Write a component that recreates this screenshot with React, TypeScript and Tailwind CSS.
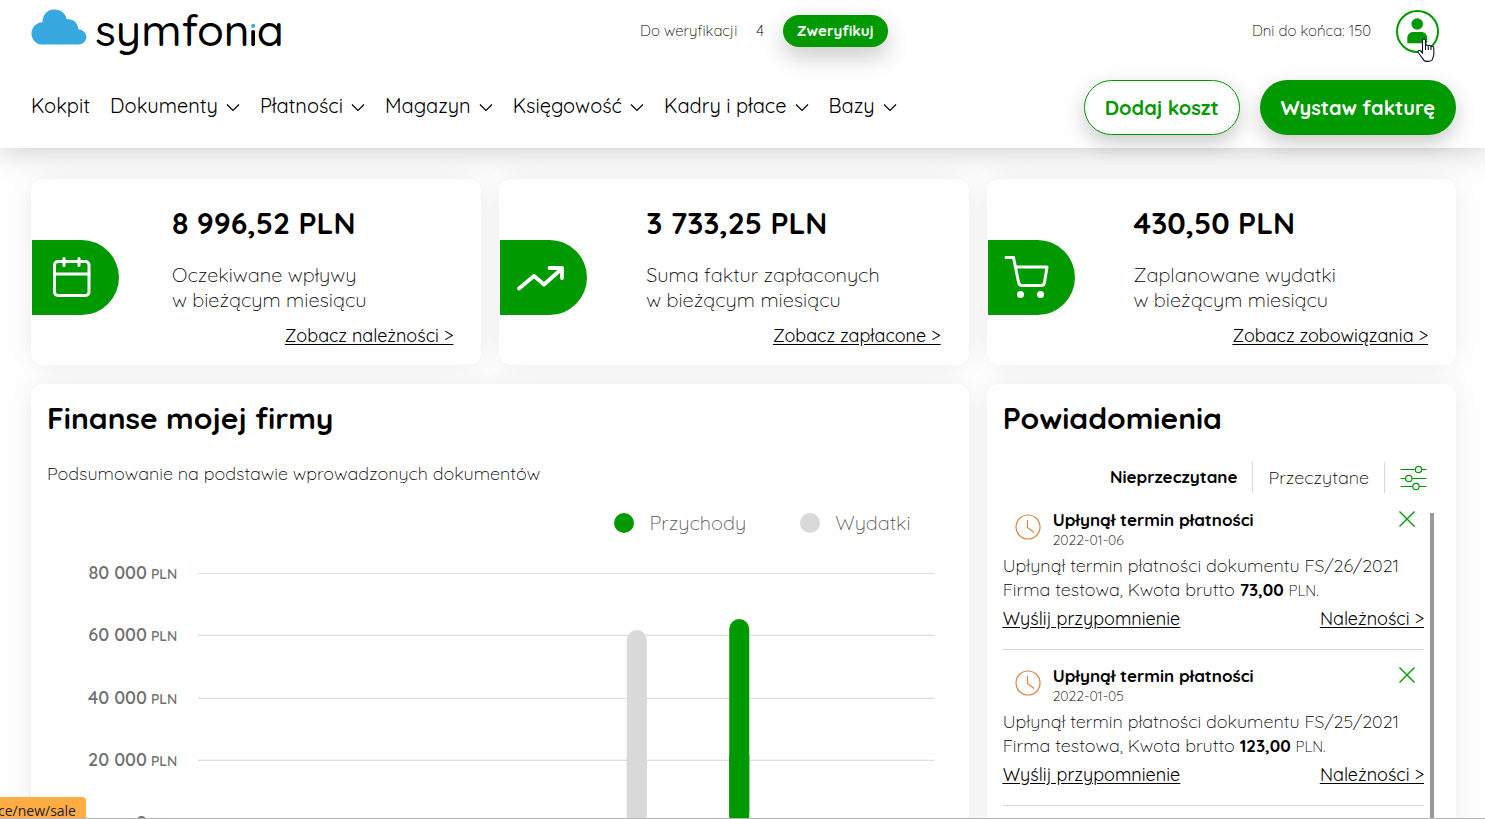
import type { ReactNode } from "react";

const NAV = [
  { label: "Kokpit", menu: false },
  { label: "Dokumenty", menu: true },
  { label: "Płatności", menu: true },
  { label: "Magazyn", menu: true },
  { label: "Księgowość", menu: true },
  { label: "Kadry i płace", menu: true },
  { label: "Bazy", menu: true },
];

const NOTIFICATIONS = [
  { date: "2022-01-06", doc: "FS/26/2021", amount: "73,00" },
  { date: "2022-01-05", doc: "FS/25/2021", amount: "123,00" },
];

const TICKS = [
  { y: 18, value: "80 000" },
  { y: 80, value: "60 000" },
  { y: 143, value: "40 000" },
  { y: 205, value: "20 000" },
  { y: 268, value: "0" },
];

const card =
  "bg-[#fefefe] rounded-xl shadow-[0_0_28px_-4px_rgba(0,0,0,0.1)] overflow-hidden";

function Logo() {
  return (
    <a href="#" className="flex items-center gap-2 pb-0.5">
      <svg
        width="56"
        height="37"
        viewBox="0 0 56 37"
        fill="#38a9e0"
        className="mb-2"
      >
        <path d="M11 36.500C5 36.500 0.500 31.500 0.500 25.500C0.500 19.500 5 14.500 11.500 14.200C11.500 6 17 1.500 23.500 1.500C30 1.500 34.500 5.500 35.800 11.300C42 10.500 46.800 14.500 47.300 21.200C51.800 21.500 55.300 24.800 55.300 29C55.300 33.300 51.800 36.500 47.500 36.500Z" />
      </svg>
      <span className="text-[44px] leading-[44px] font-medium">
        symfon
        <span className="inline-block bg-[linear-gradient(#38a9e0_36%,#000_36%)] bg-clip-text text-[31px] leading-none font-bold text-transparent">
          i
        </span>
        a
      </span>
    </a>
  );
}

function Chevron() {
  return (
    <svg width="14" height="9" viewBox="0 0 14 9" fill="none" className="mt-1">
      <path d="M1 1.500L7 7.500L13 1.500" stroke="#000" strokeWidth="1.200" />
    </svg>
  );
}

function Cursor() {
  return (
    <svg
      width="19"
      height="25"
      viewBox="0 0 19 25"
      className="absolute left-5 top-7"
    >
      <path
        d="M6.500 15V2.500C6.500 0.500 9.500 0.500 9.500 2.500V8.500C9.500 6.300 12.300 6.500 12.300 8.500C12.500 6.800 15 7 15 9C15.200 7.800 17.800 8 17.800 10.200V16C17.800 19 16.500 20.500 16 22C15 23.500 9.500 24 8 22.500C6.500 20.500 4.500 17.500 2.500 15C1 13 3 11.500 4.500 12.800Z"
        fill="#fff"
        stroke="#0c0c2c"
        strokeWidth="1.100"
      />
      <path
        d="M9.500 8V12M12.300 8.500V12M15 9V12"
        stroke="#0c0c2c"
        strokeWidth="1.100"
      />
    </svg>
  );
}

function Header() {
  return (
    <header className="bg-[#fefefe] pl-[31px] pr-[29px] pb-[13px] shadow-[0_6px_26px_rgba(0,0,0,0.17)]">
      <div className="flex h-[62px] items-center justify-between pr-[17px]">
        <Logo />
        <div className="flex items-center pr-2 text-[15px] font-light">
          <span>Do weryfikacji</span>
          <span className="mx-[19px]">4</span>
          <button className="h-8 rounded-full bg-[#090] px-3.5 font-bold text-white shadow-[0_10px_22px_rgba(0,0,0,0.2)]">
            Zweryfikuj
          </button>
        </div>
        <div className="flex items-center gap-[25px] text-[15px] font-light">
          <span>Dni do końca: 150</span>
          <button aria-label="Konto" className="relative">
            <svg width="43" height="43" viewBox="0 0 43 43" fill="#090">
              <circle
                cx="21.500"
                cy="21.500"
                r="20.500"
                fill="#fefefe"
                stroke="#090"
                strokeWidth="2"
              />
              <circle cx="21.200" cy="14" r="5.800" />
              <path d="M11.300 33.300V28.500C11.300 24.500 13.500 22 17.500 22H25C29 22 31.200 24.500 31.200 28.500V33.300Z" />
            </svg>
            <Cursor />
          </button>
        </div>
      </div>
      <div className="mt-[18px] flex h-[55px] items-center justify-between">
        <nav className="flex items-center gap-5 pb-1 text-xl">
          {NAV.map((item) => (
            <a
              key={item.label}
              href="#"
              className="flex items-center gap-2 whitespace-nowrap"
            >
              {item.label}
              {item.menu && <Chevron />}
            </a>
          ))}
        </nav>
        <div className="flex gap-5 text-xl font-bold">
          <button className="h-[55px] rounded-full border border-[#090] bg-[#fefefe] px-5 text-[#090] shadow-[0_8px_20px_rgba(0,0,0,0.2)]">
            Dodaj koszt
          </button>
          <button className="h-[55px] rounded-full bg-[#090] px-[21px] text-white shadow-[0_8px_20px_rgba(0,0,0,0.2)]">
            Wystaw fakturę
          </button>
        </div>
      </div>
    </header>
  );
}

type StatProps = {
  amount: string;
  label: string;
  link: string;
  icon: ReactNode;
};

function StatCard({ amount, label, link, icon }: StatProps) {
  return (
    <section className={`${card} flex h-[186px]`}>
      <div className="w-[31.300%] shrink-0 pt-[61px]">
        <div className="ml-px flex h-[75px] w-[87px] items-center rounded-r-full bg-[#090] pl-4">
          {icon}
        </div>
      </div>
      <div className="flex grow flex-col pr-7 pt-6">
        <h2 className="text-3xl leading-10 font-bold">{amount}</h2>
        <p className="mt-[19px] text-xl leading-[25px] font-light">
          {label}
          <br />w bieżącym miesiącu
        </p>
        <a
          href="#"
          className="mt-3 self-end text-lg leading-6 underline underline-offset-2"
        >
          {link}
        </a>
      </div>
    </section>
  );
}

function CalendarIcon() {
  return (
    <svg
      width="48"
      height="48"
      viewBox="0 0 48 48"
      fill="none"
      stroke="#fff"
      strokeWidth="3"
      strokeLinecap="round"
      className="mb-1"
    >
      <rect x="6.500" y="9.500" width="34.500" height="34" rx="3.500" />
      <path d="M6.500 22H41M16 6.500V13.500M31 6.500V13.500" />
    </svg>
  );
}

function TrendIcon() {
  return (
    <svg
      width="48"
      height="48"
      viewBox="0 0 48 48"
      fill="none"
      stroke="#fff"
      strokeWidth="3.800"
      strokeLinecap="round"
      strokeLinejoin="round"
    >
      <path d="M3 34.500L18 22L28 30.500L46 14.500M33.500 14H46V24" />
    </svg>
  );
}

function CartIcon() {
  return (
    <svg
      width="48"
      height="48"
      viewBox="0 0 48 48"
      fill="none"
      stroke="#fff"
      strokeWidth="3"
      strokeLinecap="round"
      strokeLinejoin="round"
      className="mb-1"
    >
      <path d="M2 5.500H9.500L14.500 30C14.800 32 16 33.500 18 33.500H37C39 33.500 40.200 32.500 40.500 30.500L43 15H11.500" />
      <circle cx="16.500" cy="42.500" r="3.500" fill="#fff" stroke="none" />
      <circle cx="36.500" cy="42.500" r="3.500" fill="#fff" stroke="none" />
    </svg>
  );
}

function Finances() {
  return (
    <section className={`${card} col-span-2 px-4 pt-3.5`}>
      <h2 className="text-3xl leading-10 font-bold">Finanse mojej firmy</h2>
      <p className="mt-6 text-lg leading-6 font-light">
        Podsumowanie na podstawie wprowadzonych dokumentów
      </p>
      <div className="mt-[23px] mr-[42px] flex justify-end gap-[54px] text-xl leading-7 font-light text-[#555]">
        <span className="flex items-center gap-[15px]">
          <span className="size-5 rounded-full bg-[#090]" />
          Przychody
        </span>
        <span className="flex items-center gap-[15px]">
          <span className="size-5 rounded-full bg-[#d9d9d9]" />
          Wydatki
        </span>
      </div>
      <svg viewBox="0 0 906 320" className="mt-[18px] w-full">
        {TICKS.map((tick) => (
          <g key={tick.value}>
            <text
              x="100"
              y={tick.y + 6}
              textAnchor="end"
              fill="#707070"
              className="text-lg font-semibold"
            >
              {tick.value}
            </text>
            <text
              x="104"
              y={tick.y + 6}
              fill="#707070"
              className="text-sm font-semibold"
            >
              PLN
            </text>
            <path
              d={`M151 ${tick.y + 0.5}H888`}
              stroke="#dedede"
              strokeWidth="1.200"
            />
          </g>
        ))}
        <rect x="580" y="75" width="20" height="193" rx="10" fill="#d9d9d9" />
        <rect x="580" y="200" width="20" height="68" fill="#d9d9d9" />
        <rect x="682.500" y="64" width="20" height="204" rx="10" fill="#090" />
        <rect x="682.500" y="200" width="20" height="68" fill="#090" />
      </svg>
    </section>
  );
}

type NotificationProps = { date: string; doc: string; amount: string };

function Notification({ date, doc, amount }: NotificationProps) {
  return (
    <li className="h-[156px] border-b border-[#d9d9d9] pt-3.5 first:h-[142px] first:pt-0">
      <div className="flex">
        <svg
          width="26"
          height="26"
          viewBox="0 0 26 26"
          fill="none"
          stroke="#dd8440"
          strokeWidth="1.200"
          className="ml-3 mt-1.5"
        >
          <circle cx="13" cy="13" r="12" />
          <path d="M12.500 6V13.500L19 18.500" />
        </svg>
        <div className="ml-3 grow">
          <h3 className="text-[17px] leading-6 font-bold">
            Upłynął termin płatności
          </h3>
          <p className="text-sm leading-4 font-light">{date}</p>
        </div>
        <button aria-label="Zamknij" className="mr-[9px] self-start pt-[3px]">
          <svg width="16" height="16" viewBox="0 0 16 16">
            <path
              d="M0.500 0.500L15.500 15.500M15.500 0.500L0.500 15.500"
              stroke="#090"
              strokeWidth="1.400"
            />
          </svg>
        </button>
      </div>
      <p className="mt-1.5 text-lg leading-6 font-light whitespace-nowrap">
        Upłynął termin płatności dokumentu {doc}
        <br />
        Firma testowa, Kwota brutto{" "}
        <b className="text-[17px] font-bold">{amount}</b>{" "}
        <span className="text-[15px]">PLN.</span>
      </p>
      <div className="mt-1 flex justify-between text-lg leading-6 underline underline-offset-2">
        <a href="#">Wyślij przypomnienie</a>
        <a href="#">Należności &gt;</a>
      </div>
    </li>
  );
}

function Notifications() {
  return (
    <section className={`${card} px-4 pt-3.5`}>
      <h2 className="text-3xl leading-10 font-bold">Powiadomienia</h2>
      <div className="mt-6 mr-[13px] flex h-[31px] items-stretch justify-end text-lg">
        <button className="pr-[15px] text-[17px] font-bold">
          Nieprzeczytane
        </button>
        <button className="border-x border-[#d9d9d9] px-[15px] font-light">
          Przeczytane
        </button>
        <button aria-label="Filtry" className="pl-[15px]">
          <svg
            width="27"
            height="26"
            viewBox="0 0 27 26"
            fill="#fefefe"
            stroke="#090"
            strokeWidth="1.200"
          >
            <path d="M0.500 4.500H26.500M0.500 13.500H26.500M0.500 21.500H26.500" />
            <circle cx="18.500" cy="4.500" r="3.200" />
            <circle cx="8.800" cy="13.500" r="3.200" />
            <circle cx="16" cy="21.500" r="3.200" />
          </svg>
        </button>
      </div>
      <div className="mt-[15px] mr-[6px] flex justify-between gap-1.5">
        <ul className="grow">
          {NOTIFICATIONS.map((n) => (
            <Notification key={n.doc} {...n} />
          ))}
        </ul>
        <div className="mt-[5px] min-h-80 w-1 shrink-0 bg-[#999]" />
      </div>
    </section>
  );
}

export default function App() {
  return (
    <div className="relative h-screen overflow-hidden bg-[#fefefe] font-['Quicksand','Inter',sans-serif] text-black">
      <Header />
      <main className="grid grid-cols-[450fr_469fr_469fr] gap-x-[18px] gap-y-[19px] pl-[31px] pr-[29px] pt-[31px]">
        <StatCard
          amount="8 996,52 PLN"
          label="Oczekiwane wpływy"
          link="Zobacz należności >"
          icon={<CalendarIcon />}
        />
        <StatCard
          amount="3 733,25 PLN"
          label="Suma faktur zapłaconych"
          link="Zobacz zapłacone >"
          icon={<TrendIcon />}
        />
        <StatCard
          amount="430,50 PLN"
          label="Zaplanowane wydatki"
          link="Zobacz zobowiązania >"
          icon={<CartIcon />}
        />
        <Finances />
        <Notifications />
      </main>
      <div className="absolute inset-x-0 bottom-0 border-b border-[#b5b5b5]">
        <span className="block w-[86px] overflow-hidden rounded-tr bg-[#ffad42] pt-1.5 -indent-0.5 font-['Open_Sans',sans-serif] text-[14px] leading-[15px] text-[#222]">
          ce/new/sale
        </span>
      </div>
    </div>
  );
}
